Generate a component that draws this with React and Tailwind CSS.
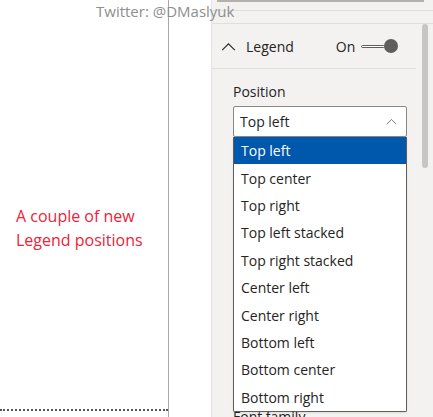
import { useState } from 'react';

const OPTIONS = [
  'Top left',
  'Top center',
  'Top right',
  'Top left stacked',
  'Top right stacked',
  'Center left',
  'Center right',
  'Bottom left',
  'Bottom center',
  'Bottom right',
];

const ChevronUp = ({ className }) => (
  <svg viewBox="0 0 16 10" className={className} fill="none" stroke="currentColor" strokeWidth="1.2">
    <path d="M1 9 L8 2 L15 9" />
  </svg>
);

const App = () => {
  const [selected] = useState('Top left');

  return (
    <div
      className="relative w-[433px] h-[417px] overflow-hidden bg-white flex text-[#252423]"
      style={{ fontFamily: '"Segoe UI", "Open Sans", "Liberation Sans", sans-serif' }}
    >
      {/* Canvas */}
      <div className="w-[169px] shrink-0 border-r border-[#a8a8a8] flex flex-col">
        <div className="pt-[204px] pl-[16px] text-[16px] leading-[24px] text-[#ee2238]">
          A couple of new<br />Legend positions
        </div>
        <div className="mt-auto mb-[6px] border-b-2 border-dotted border-[#555]" />
      </div>

      <div className="w-[42px] shrink-0" />

      {/* Format pane */}
      <div className="flex-1 bg-[#f3f2f1] border-l border-[#e6e4e2] flex flex-col min-h-0">
        <div className="h-[11px] shrink-0 border-b border-[#e1dfdd] relative">
          <div className="absolute left-[5px] right-[10px] top-0 h-[2px] bg-[#b3b0ad]" />
        </div>
        <div className="h-[13px] shrink-0 border-b border-[#e1dfdd]" />

        <div className="flex flex-1 min-h-0">
          <div className="flex-1 flex flex-col">
            <div className="h-[45px] shrink-0 flex items-center border-b border-[#e1dfdd] pl-[9px]">
              <ChevronUp className="w-[15px] h-[9px] text-[#252423]" />
              <span className="ml-[10px] text-[14px]">Legend</span>
              <span className="ml-[42px] text-[14px]">On</span>
              <div className="ml-[6px] flex items-center">
                <div className="w-[24px] h-[3px] border border-[#605e5c] bg-white rounded-full" />
                <div className="w-[14px] h-[14px] rounded-full bg-[#605e5c] -ml-[1px]" />
              </div>
            </div>

            <div className="pl-[21px] pr-[9px] shrink-0">
              <div className="mt-[13px] text-[14px] leading-[20px]">Position</div>
              <div className="mt-[4px] h-[31px] w-[174px] bg-white border border-[#8a8886] rounded-[2px] flex items-center justify-between pl-[6px] pr-[9px]">
                <span className="text-[14px]">{selected}</span>
                <ChevronUp className="w-[11px] h-[7px] text-[#605e5c]" />
              </div>
              <div className="relative h-0">
                <div className="absolute left-0 top-0 w-[174px] bg-white border border-[#605e5c] border-t-0 rounded-b-[2px] shadow-[0_1px_2px_rgba(0,0,0,0.1)] z-10">
                  {OPTIONS.map((o) => (
                    <div
                      key={o}
                      className={`h-[27.4px] flex items-center pl-[7px] text-[14px] ${
                        o === selected ? 'bg-[#0058ad] text-white' : 'text-[#252423]'
                      }`}
                    >
                      {o}
                    </div>
                  ))}
                </div>
              </div>
              <div className="mt-[270px] text-[14px] leading-[20px]">Font family</div>
            </div>
          </div>

          {/* Scrollbar */}
          <div className="w-[18px] shrink-0 pl-[6px]">
            <div className="w-[6px] h-[144px] bg-[#c8c6c4] rounded-full" />
          </div>
        </div>
      </div>

      {/* Watermark */}
      <div className="absolute left-[96px] top-[1px] text-[15px] leading-[20px] text-[#8e8e8e]">
        Twitter: @DMaslyuk
      </div>
    </div>
  );
};

export default App;
